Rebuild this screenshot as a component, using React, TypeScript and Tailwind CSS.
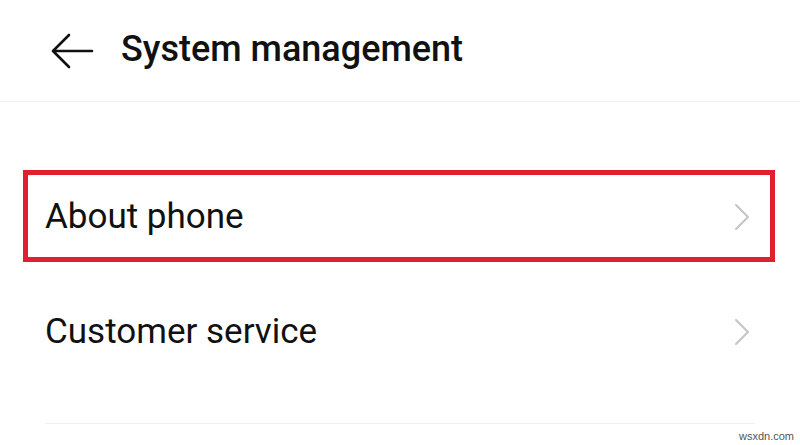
import React from "react";

function Chevron() {
  return (
    <svg width="16" height="28" viewBox="0 0 16 28" className="shrink-0">
      <path d="M2 2 L14 14 L2 26" fill="none" stroke="#c4c4c4" strokeWidth="2" strokeLinecap="round" strokeLinejoin="round" />
    </svg>
  );
}

export default function App() {
  return (
    <div className="w-[800px] h-[445px] bg-white relative overflow-hidden" style={{ fontFamily: "Roboto, 'Noto Sans', sans-serif" }}>
      <div className="h-[102px] flex items-center border-b border-[#f1f1f1]">
        <div className="w-[121px] flex pl-[50px]">
          <svg width="44" height="38" viewBox="0 0 44 38">
            <path d="M3 19 H42 M3 19 L19 3 M3 19 L19 35" fill="none" stroke="#111" strokeWidth="2.6" strokeLinecap="round" strokeLinejoin="round" />
          </svg>
        </div>
        <div className="text-[36px] leading-none font-medium text-[#111] pb-[3px]">System management</div>
      </div>
      <div className="pt-[57px]">
        <div className="relative h-[115px] flex items-center justify-between pl-[45px] pr-[50px]">
          <span className="text-[35px] leading-none text-[#111]">About phone</span>
          <Chevron />
          <div className="absolute left-[23px] right-[25px] top-[11px] bottom-[12px] border-[5px] border-[#e21f2e]" />
        </div>
        <div className="h-[115px] flex items-center justify-between pl-[45px] pr-[50px]">
          <span className="text-[35px] leading-none text-[#111]">Customer service</span>
          <Chevron />
        </div>
        <div className="mt-[34px] mx-[45px] border-t border-[#f0f0f0]" />
      </div>
      <div className="absolute right-[6px] bottom-[1px] text-[11px] text-[#555]" style={{ fontFamily: "'Liberation Sans', sans-serif" }}>wsxdn.com</div>
    </div>
  );
}
